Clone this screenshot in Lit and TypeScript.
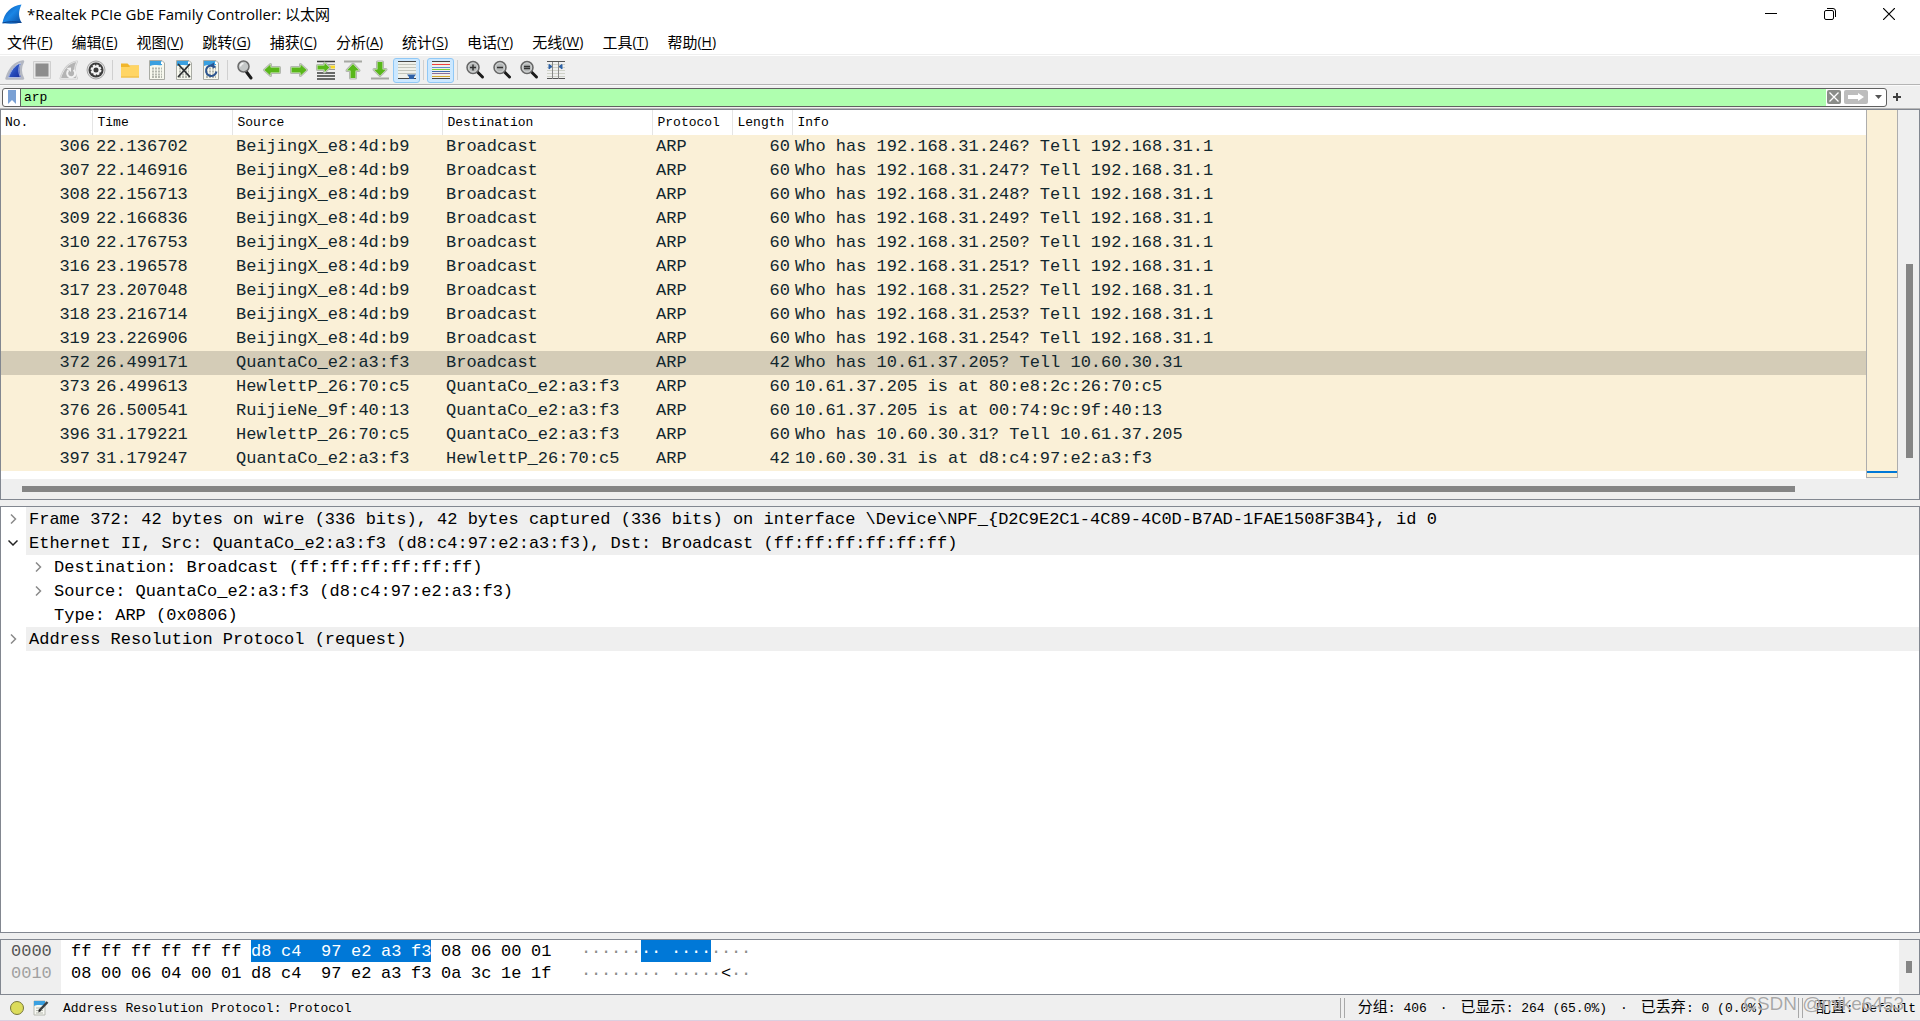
import { LitElement, html, css, svg, nothing } from "lit";
import { customElement, state } from "lit/decorators.js";
import { classMap } from "lit/directives/class-map.js";

type Packet = [number, string, string, string, number, string];
type Icon = ReturnType<typeof svg>;

const BJ = "BeijingX_e8:4d:b9";
const QC = "QuantaCo_e2:a3:f3";
const HP = "HewlettP_26:70:c5";
const probe = (no: number, time: string, host: number): Packet =>
  [no, time, BJ, "Broadcast", 60, `Who has 192.168.31.${host}? Tell 192.168.31.1`];

const PACKETS: Packet[] = [
  probe(306, "22.136702", 246),
  probe(307, "22.146916", 247),
  probe(308, "22.156713", 248),
  probe(309, "22.166836", 249),
  probe(310, "22.176753", 250),
  probe(316, "23.196578", 251),
  probe(317, "23.207048", 252),
  probe(318, "23.216714", 253),
  probe(319, "23.226906", 254),
  [372, "26.499171", QC, "Broadcast", 42, "Who has 10.61.37.205? Tell 10.60.30.31"],
  [373, "26.499613", HP, QC, 60, "10.61.37.205 is at 80:e8:2c:26:70:c5"],
  [376, "26.500541", "RuijieNe_9f:40:13", QC, 60, "10.61.37.205 is at 00:74:9c:9f:40:13"],
  [396, "31.179221", HP, QC, 60, "Who has 10.60.30.31? Tell 10.61.37.205"],
  [397, "31.179247", QC, HP, 42, "10.60.30.31 is at d8:c4:97:e2:a3:f3"],
];

const MENUS: [string, string][] = [
  ["文件", "F"], ["编辑", "E"], ["视图", "V"], ["跳转", "G"], ["捕获", "C"], ["分析", "A"],
  ["统计", "S"], ["电话", "Y"], ["无线", "W"], ["工具", "T"], ["帮助", "H"],
];

const TREE: { text: string; level: number; mark: "closed" | "open" | "none" }[] = [
  { text: "Frame 372: 42 bytes on wire (336 bits), 42 bytes captured (336 bits) on interface \\Device\\NPF_{D2C9E2C1-4C89-4C0D-B7AD-1FAE1508F3B4}, id 0", level: 0, mark: "closed" },
  { text: "Ethernet II, Src: QuantaCo_e2:a3:f3 (d8:c4:97:e2:a3:f3), Dst: Broadcast (ff:ff:ff:ff:ff:ff)", level: 0, mark: "open" },
  { text: "Destination: Broadcast (ff:ff:ff:ff:ff:ff)", level: 1, mark: "closed" },
  { text: "Source: QuantaCo_e2:a3:f3 (d8:c4:97:e2:a3:f3)", level: 1, mark: "closed" },
  { text: "Type: ARP (0x0806)", level: 1, mark: "none" },
  { text: "Address Resolution Protocol (request)", level: 0, mark: "closed" },
];

const HEX = [
  { offset: "0000", bytes: "ff ff ff ff ff ff d8 c4 97 e2 a3 f3 08 06 00 01", ascii: "················", from: 6, to: 11 },
  { offset: "0010", bytes: "08 00 06 04 00 01 d8 c4 97 e2 a3 f3 0a 3c 1e 1f", ascii: "·············<··", from: -1, to: -1 },
];

const page = svg`
  <path d="M2.500 .5H15L17.500 3V19.500H2.500Z" fill="#f7f8ee" stroke="#a9aba4"/>
  <path d="M3 1h12v4c-4 1-8-1-12 1z" fill="#3aa0e0"/><path d="M14 1v3h3z" fill="#fff"/>`;
const digits = svg`<path d="M5 8.500h10M5 11.500h10M5 14.500h10M5 17h10" stroke="#b4b7ae" stroke-width="2" stroke-dasharray="2 1"/>`;
const lens = (inner: Icon | typeof nothing) => svg`
  <path d="M12.500 12l5 5" stroke="#1c1c1c" stroke-width="3" stroke-linecap="round"/>
  <circle cx="8" cy="7.500" r="6" fill="#b5b8b8" stroke="#666" stroke-width="1.500"/>
  <circle cx="8" cy="7.500" r="4.500" fill="none" stroke="#d4d6d6"/>${inner}`;
const green = (d: string) => svg`
  <path d=${d} fill="#55b516" stroke="#b3b8af" stroke-width="3" stroke-linejoin="round"/>
  <path d=${d} fill="#5ab81c" stroke="#e3ecda" stroke-width="1" stroke-linejoin="round"/>
  <path d=${d} fill="#59b71a"/>`;
const FIN = "M1.500 18.500C4 10 9 3 18 1.500C14.500 8 15 13 18 18.500Z";

const ICONS: Record<string, Icon> = {
  start: svg`<defs><linearGradient id="g" x1="0" y1="0" x2="1" y2="1"><stop offset="0" stop-color="#5b83dd"/><stop offset=".6" stop-color="#2448b8"/><stop offset="1" stop-color="#1b2f9c"/></linearGradient></defs>
    <path d=${FIN} fill="url(#g)" stroke="#b4b8c2" stroke-width="2.500" stroke-linejoin="round"/><path d="M3.500 17.500C6 10.500 9.500 5.500 15.500 3C13 8.500 13.500 13 15.500 17.500Z" fill="url(#g)" stroke="#eef1fa" stroke-width=".6"/>`,
  stop: svg`<path d="M1.500 1.500h17v17h-17z" fill="#e8e8e8" stroke="#cfcfcf"/><path d="M3.500 3.500h13v13h-13z" fill="#8d8d8d"/>`,
  restart: svg`<path d=${FIN} fill="#bcbcbc" stroke="#c9c9c9" stroke-width="2" stroke-linejoin="round"/><path d=${FIN} fill="#b4b4b4" stroke="#f4f4f4" stroke-width=".7"/>
    <path d="M14.500 10a4 4 0 1 1-5 .3" fill="none" stroke="#f2f2f2" stroke-width="2"/><path d="M7.500 8l4.500-.5v4.500z" fill="#f2f2f2"/>`,
  options: svg`<circle cx="10" cy="10" r="9" fill="#dedede" stroke="#a6a6a6"/><circle cx="10" cy="10" r="7.500" fill="#3c3c3c"/>
    <circle cx="10" cy="10" r="4.500" fill="none" stroke="#f3f3f3" stroke-width="2" stroke-dasharray="2.200 1.300"/><circle cx="10" cy="10" r="3.500" fill="none" stroke="#f3f3f3" stroke-width="2"/><circle cx="10" cy="10" r="2" fill="#3c3c3c"/>`,
  open: svg`<path d="M1 3.500h6.500l2 2H19V17H1z" fill="#f1b62c"/><path d="M1 7h8l2-1.500h8V17.500H1z" fill="#ffd564"/><path d="M1 17h18" stroke="#eab741"/>`,
  save: svg`${page}${digits}`,
  close: svg`${page}${digits}<path d="M4.500 4.500l11 12M15.500 4.500l-11 12" stroke="#2f3234" stroke-width="1.800" stroke-linecap="round"/>`,
  reload: svg`${page}${digits}<path d="M14.500 7.500a5.300 5.300 0 1 0 1 4" fill="none" stroke="#2c5590" stroke-width="2"/><path d="M8.500 5.500L13 2.500v6z" fill="#2c5590"/>`,
  find: svg`<path d="M11.500 12l4.500 6" stroke="#1c1c1c" stroke-width="3" stroke-linecap="round"/><circle cx="8.500" cy="6.500" r="5.500" fill="#c4c7c7" stroke="#6a6a6a" stroke-width="1.500"/><path d="M5.500 6.500a3 3 0 0 1 3-3" stroke="#f4f4f4" stroke-width="1.500" fill="none"/>`,
  back: green("M2.500 10L8.500 4.500V7.500H17.500V12.500H8.500V15.500Z"),
  forward: green("M17.500 10L11.500 4.500V7.500H2.500V12.500H11.500V15.500Z"),
  goto: svg`<path d="M1 1.500h18M1 13h18M1 16h18M1 19h18" stroke="#3d3f3d" stroke-width="1.300"/><path d="M12 4.500h7M12 9.500h7" stroke="#999"/><path d="M13 7h6" stroke="#f8d928" stroke-width="3"/>${green("M13.500 7.500L8.500 3V5.500H1.500V9.500H8.500V12Z")}`,
  first: svg`<path d="M1 1.500h18" stroke="#a6a8a3" stroke-width="2"/>${green("M10 4L16 10.500H12.500V18H7.500V10.500H4Z")}`,
  last: svg`<path d="M1 18.500h18" stroke="#a6a8a3" stroke-width="2"/>${green("M10 15.500L16 9.500H12.500V2H7.500V9.500H4Z")}`,
  autoscroll: svg`<path d="M1 1h18v18H1z" fill="#eff1ea"/><path d="M1 1.500h18M1 18.500h18" stroke="#454745"/><path d="M1 4.500h18M1 7.500h18M1 10.500h18M1 13.500h18" stroke="#c3c6bc"/><path d="M10 14.500h9l-2 2.500v2h-5v-2z" fill="#2f62a8"/>`,
  colorize: svg`<path d="M1 1h18v18H1z" fill="#eff1ea"/><path d="M1 1.500h18M1 18.500h18" stroke="#454745"/><path d="M1 4.500h18" stroke="#ef3f3f"/><path d="M1 7.500h18" stroke="#5f8fd0"/><path d="M1 9.500h18" stroke="#7fd33a"/><path d="M1 11.500h18" stroke="#3f6cb0"/><path d="M1 13.500h18" stroke="#8c6f9c"/><path d="M1 16.500h18" stroke="#d2a62c"/>`,
  zoomin: lens(svg`<path d="M5 7.500h6M8 4.500v6" stroke="#333" stroke-width="1.500"/>`),
  zoomout: lens(svg`<path d="M5 7.500h6" stroke="#333" stroke-width="1.500"/>`),
  zoomreset: lens(svg`<path d="M5 6.500h6M5 8.500h6" stroke="#333" stroke-width="1.300"/>`),
  resize: svg`<path d="M1 4.500h18M1 7.500h18M1 10.500h18M1 13.500h18M1 16.500h18" stroke="#cfd2c8"/><path d="M1 1.500h18M1 18.500h18" stroke="#555"/><path d="M6.500 2v17M12.500 2v17" stroke="#888"/><path d="M3 4.500l3 2-3 2.500zM16 4.500l-3 2 3 2.500z" fill="#2f62a8" stroke="#2f62a8"/>`,
};

const TOOLS: [string, string][] = [
  ["start", "Start"], ["stop", "Stop"], ["restart", "Restart"], ["options", "Options"], ["", ""],
  ["open", "Open"], ["save", "Save"], ["close", "Close"], ["reload", "Reload"], ["", ""],
  ["find", "Find"], ["back", "Back"], ["forward", "Forward"], ["goto", "Go to packet"], ["first", "First packet"],
  ["last", "Last packet"], ["autoscroll", "Auto scroll"], ["", ""], ["colorize", "Colorize"], ["", ""],
  ["zoomin", "Zoom in"], ["zoomout", "Zoom out"], ["zoomreset", "Normal size"], ["resize", "Resize columns"],
];

const baseStyles = css`
  :host, * { box-sizing: border-box; }
  button { font: inherit; color: inherit; background: none; border: 0; padding: 0; margin: 0; }
  svg { display: block; }
  table { border-collapse: collapse; border-spacing: 0; }
  td, th { padding: 0; font-weight: normal; text-align: left; }
`;

@customElement("window-header")
class WindowHeader extends LitElement {
  static styles = [baseStyles, css`
    :host { display: block; background: #fff; color: #000; }
    .title { display: flex; align-items: center; height: 28px; padding: 0 2px; gap: 5px; }
    .name { flex: 1; font: 15px/20px "Open Sans", sans-serif; white-space: nowrap; }
    .cjk { font: 15px/20px "Noto Sans CJK SC", sans-serif; }
    .win { display: flex; }
    .win button { width: 59px; height: 28px; display: grid; place-items: center; }
    .menu { display: flex; height: 27px; padding: 0 7px; gap: 19px; border-bottom: 1px solid #efefef; margin-bottom: 1px; }
    .menu button { display: flex; align-items: center; height: 28px; font: 14px/20px "Open Sans", sans-serif; white-space: nowrap; }
    .key { text-decoration: underline; text-underline-offset: 2px; }
  `];
  render() {
    return html`
      <div class="title">
        <svg width="20" height="20" viewBox="0 0 20 20">
          <defs><linearGradient id="f" x1="0" y1="0" x2="1" y2="1"><stop offset="0" stop-color="#0a4fa8"/><stop offset=".5" stop-color="#1a86e6"/><stop offset="1" stop-color="#0a4a9e"/></linearGradient></defs>
          <path d="M.5 19C2 9 9 1.500 19.500 .5C16 8 16.500 13 19.500 18.500C13 20 6 20 .5 19Z" fill="url(#f)"/>
          <path d="M.5 19C6 17.500 13 17.500 19.500 18.500" fill="none" stroke="#0a3d86" stroke-width="1"/>
        </svg>
        <span class="name">*Realtek PCIe GbE Family Controller: <span class="cjk">以太网</span></span>
        <div class="win">
          <button aria-label="Minimize"><svg width="12" height="12"><path d="M0 5.500h12" stroke="#000"/></svg></button>
          <button aria-label="Restore"><svg width="12" height="12" fill="none" stroke="#000"><rect x=".5" y="2.500" width="9" height="9" rx="1.500"/><path d="M3 .5h6a2.500 2.500 0 0 1 2.500 2.500v6"/></svg></button>
          <button aria-label="Close"><svg width="12" height="12"><path d="M0 0l12 12M12 0L0 12" stroke="#000" stroke-width="1.200"/></svg></button>
        </div>
      </div>
      <nav class="menu">
        ${MENUS.map(([name, key]) => html`<button><span class="cjk">${name}</span>(<span class="key">${key}</span>)</button>`)}
      </nav>`;
  }
}

@customElement("tool-strip")
class ToolStrip extends LitElement {
  static styles = [baseStyles, css`
    :host { display: flex; align-items: center; height: 29px; padding: 0 1px; background: #efefef; border-bottom: 1px solid #b4b4b4; }
    button { width: 27px; height: 25px; display: grid; place-items: center; border-radius: 3px; }
    .on { background: #cce8ff; border: 1px solid #90c8f6; }
    .sep { width: 1px; height: 20px; margin: 0 3px; background: #d0d0d0; }
  `];
  render() {
    return TOOLS.map(([id, label]) => id
      ? html`<button class=${classMap({ on: id === "autoscroll" || id === "colorize" })} aria-label=${label}>
          <svg width="20" height="20" viewBox="0 0 20 20" fill="none">${ICONS[id]}</svg></button>`
      : html`<span class="sep"></span>`);
  }
}

@customElement("filter-bar")
class FilterBar extends LitElement {
  @state() value = "arp";
  static styles = [baseStyles, css`
    :host { display: flex; align-items: center; height: 24px; padding: 0 2px; background: #efefef; border-top: 1px solid #fafafa; border-bottom: 1px solid #b8b8b8; }
    .box { flex: 1; display: flex; align-items: center; height: 19px; border: 1px solid #606060; border-radius: 3px; background: #fff; overflow: hidden; }
    .mark { width: 18px; height: 17px; display: grid; place-items: center; border-right: 1px solid #606060; }
    input { flex: 1; min-width: 0; height: 17px; border: 0; outline: 0; padding: 0 3px; background: #afffaf; color: #000; font: 13px/17px "Liberation Mono", monospace; }
    .clear { width: 14px; height: 14px; margin: 0 3px 0 1px; background: #8b8d89; border-radius: 2px; }
    .apply { width: 24px; height: 14px; background: #bdbdbd; border-radius: 2px; }
    .drop { width: 18px; height: 17px; display: grid; place-items: center end; padding-right: 4px; }
    .plus { width: 20px; height: 18px; margin-right: 11px; display: grid; place-items: center; }
  `];
  render() {
    return html`
      <div class="box">
        <button class="mark" aria-label="Bookmarks"><svg width="8" height="14"><path d="M0 0h8v14l-4-4-4 4z" fill="#7aa0d4"/></svg></button>
        <input aria-label="Display filter" .value=${this.value} @input=${(e: Event) => (this.value = (e.target as HTMLInputElement).value)} />
        <button class="clear" aria-label="Clear" @click=${() => (this.value = "")}><svg width="14" height="14"><path d="M2.500 2.500l9 9M11.500 2.500l-9 9" stroke="#fff" stroke-width="1.300"/></svg></button>
        <button class="apply" aria-label="Apply"><svg width="24" height="14"><path d="M4 5h10V3l6 4-6 4V9H4z" fill="#fff"/></svg></button>
        <button class="drop" aria-label="Recent filters"><svg width="7" height="4"><path d="M0 0h7L3.500 4z" fill="#555"/></svg></button>
      </div>
      <button class="plus" aria-label="Add"><svg width="8" height="8"><path d="M4 0v8M0 4h8" stroke="#404040" stroke-width="2"/></svg></button>`;
  }
}

@customElement("packet-list")
class PacketList extends LitElement {
  @state() selected = 372;
  static styles = [baseStyles, css`
    :host { display: block; border: 1px solid #828790; background: #efefef; }
    .body { display: flex; height: 369px; }
    .rows { flex: 1; min-width: 0; background: #fff; }
    table { width: 100%; table-layout: fixed; }
    th { height: 25px; padding-left: 5px; color: #000; font: 13px/24px "Liberation Mono", monospace; border-right: 1px solid #e5e5e5; white-space: nowrap; }
    th:first-child { padding-left: 4px; }
    th:last-child { border-right: 0; }
    td { height: 24px; padding-left: 4px; font: 17px/24px "Liberation Mono", monospace; color: #12272e; white-space: nowrap; overflow: hidden; }
    tbody tr { background: #faf0d7; }
    tbody tr.sel { background: #d4ccb7; }
    td.num { text-align: right; padding: 0 2px 0 0; }
    td.info { padding-left: 3px; }
    .c-no { width: 91px; }
    .c-time { width: 140px; }
    .c-addr { width: 210px; }
    .c-proto { width: 80px; }
    .c-len { width: 60px; }
    .map { width: 32px; height: 368px; display: flex; flex-direction: column; border: 1px solid #adadad; border-top: 0; background: #faf0d7; }
    .mark { margin-top: auto; margin-bottom: 4px; height: 2px; background: #0078d7; }
    .vbar { width: 20px; margin-left: 1px; padding: 154px 6px 20px 7px; }
    .vthumb { height: 194px; background: #858585; }
    .hbar { height: 20px; padding: 7px 124px 7px 21px; }
    .hthumb { height: 6px; background: #858585; }
  `];
  render() {
    return html`
      <div class="body">
        <div class="rows">
          <table>
            <colgroup><col class="c-no" /><col class="c-time" /><col class="c-addr" /><col class="c-addr" /><col class="c-proto" /><col class="c-len" /><col /></colgroup>
            <thead><tr>${["No.", "Time", "Source", "Destination", "Protocol", "Length", "Info"].map((h) => html`<th scope="col">${h}</th>`)}</tr></thead>
            <tbody>
              ${PACKETS.map(([no, time, src, dst, len, info]) => html`
                <tr class=${classMap({ sel: no === this.selected })} @click=${() => (this.selected = no)}>
                  <td class="num">${no}</td><td>${time}</td><td>${src}</td><td>${dst}</td><td>ARP</td><td class="num">${len}</td><td class="info">${info}</td>
                </tr>`)}
            </tbody>
          </table>
        </div>
        <div class="map"><div class="mark"></div></div>
        <div class="vbar"><div class="vthumb"></div></div>
      </div>
      <div class="hbar"><div class="hthumb"></div></div>`;
  }
}

@customElement("packet-details")
class PacketDetails extends LitElement {
  static styles = [baseStyles, css`
    :host { display: block; border: 1px solid #828790; background: #fff; overflow: hidden; }
    ul { list-style: none; margin: 0; padding: 0; }
    li { display: flex; height: 24px; color: #000; font: 17px/25px "Liberation Mono", monospace; white-space: nowrap; }
    .nested { padding-left: 25px; }
    button, .blank { width: 25px; height: 24px; padding-right: 2px; display: grid; place-items: center; }
    .text { flex: 1; padding-left: 3px; }
    .top .text { background: #efefef; }
  `];
  render() {
    return html`<ul>${TREE.map((n) => html`
      <li class=${n.level ? "nested" : "top"}>
        ${n.mark === "none" ? html`<span class="blank"></span>` : html`
          <button aria-label="Toggle" aria-expanded=${n.mark === "open"}>
            <svg width="10" height="10" fill="none" stroke-width="1.500">
              ${n.mark === "open"
                ? svg`<path d="M.5 2.500L5 7l4.500-4.500" stroke="#222"/>`
                : svg`<path d="M3 .5L7.500 5 3 9.500" stroke="#8a8a8a"/>`}
            </svg>
          </button>`}
        <span class="text">${n.text}</span>
      </li>`)}</ul>`;
  }
}

@customElement("hex-view")
class HexView extends LitElement {
  static styles = [baseStyles, css`
    :host { display: flex; border: 1px solid #828790; background: linear-gradient(90deg, #efefef 60px, #fff 60px); height: 56px; }
    .dump { flex: 1; color: #000; font: 17px/24px "Liberation Mono", monospace; }
    .row { display: flex; height: 22px; }
    .row span { height: 22px; }
    .off { width: 60px; padding-left: 10px; margin-right: 10px; color: #555; }
    .off.dim { color: #a0a0a0; }
    .byte { width: 20px; }
    .char, .sp { width: 10px; }
    .char { color: #8a8a8a; }
    .char.print { color: #000; }
    .hl, .char.hl { background: #0078d7; color: #fff; }
    .gap { width: 30px; }
    .bar { width: 20px; padding: 21px 7px 0 7px; background: #efefef; }
    .thumb { height: 12px; background: #858585; }
  `];
  private sep(i: number, from: number, to: number) {
    const hl = i > from && i <= to && from >= 0;
    return html`<span class=${classMap({ sp: true, hl })}></span>`;
  }
  render() {
    return html`
      <div class="dump">
        ${HEX.map(({ offset, bytes, ascii, from, to }) => {
          const on = (i: number) => from >= 0 && i >= from && i <= to;
          return html`<div class="row">
            <span class=${classMap({ off: true, dim: from < 0 })}>${offset}</span>
            ${bytes.split(" ").map((b, i) => html`${i ? this.sep(i, from, to) : nothing}${i === 8 ? this.sep(i, from, to) : nothing}<span class=${classMap({ byte: true, hl: on(i) })}>${b}</span>`)}
            <span class="gap"></span>
            ${[...ascii].map((c, i) => html`${i === 8 ? this.sep(i, from, to) : nothing}<span class=${classMap({ char: true, hl: on(i), print: c !== "·" })}>${c}</span>`)}
          </div>`;
        })}
      </div>
      <div class="bar"><div class="thumb"></div></div>`;
  }
}

@customElement("status-strip")
class StatusStrip extends LitElement {
  static styles = [baseStyles, css`
    :host { display: flex; align-items: center; position: relative; height: 26px; padding: 0 4px 0 9px; background: #efefef; border-bottom: 1px solid #dccfe0; color: #000; font: 13px/24px "Liberation Mono", monospace; white-space: nowrap; }
    .msg { flex: 1; padding: 2px 0 0 14px; }
    .icons { display: flex; gap: 8px; }
    .cjk { font: 15px/24px "Noto Sans CJK SC", sans-serif; }
    .stats { display: flex; align-items: baseline; gap: 13px; width: 440px; }
    .grip { width: 5px; height: 20px; border: solid #a8a8a8; border-width: 0 1px; margin-right: 13px; }
    .wm { position: absolute; right: 16px; top: -3px; font: 19px/24px "Liberation Sans", sans-serif; color: rgba(140, 140, 140, .75); text-shadow: 0 0 1px #fff; }
  `];
  render() {
    return html`
      <div class="icons">
        <button aria-label="Expert info"><svg width="16" height="16"><circle cx="8" cy="8" r="6.500" fill="#dcdc5a" stroke="#77773a"/></svg></button>
        <button aria-label="Capture comment"><svg width="16" height="16"><path d="M1 1h11v14H1z" fill="#f7f8f2" stroke="#b8bab2"/><path d="M1 1h11v4c-4 1-7-1-11 1z" fill="#3aa0e0"/><path d="M3 8h7M3 10.500h7M3 13h7" stroke="#b4b7ae"/><path d="M14.500 2L6 11" stroke="#3a3f42" stroke-width="2.500"/><path d="M6.500 9.500l-1.500 3 3-1.500z" fill="#222"/></svg></button>
      </div>
      <span class="msg">Address Resolution Protocol: Protocol</span>
      <span class="grip"></span>
      <span class="stats">
        <span><span class="cjk">分组</span>: 406</span><span>·</span>
        <span><span class="cjk">已显示</span>: 264 (65.0%)</span><span>·</span>
        <span><span class="cjk">已丢弃</span>: 0 (0.0%)</span>
      </span>
      <span class="grip"></span>
      <span><span class="cjk">配置</span>: Default</span>
      <span class="wm">CSDN @mike6453</span>`;
  }
}

@customElement("app-root")
class AppRoot extends LitElement {
  static styles = css`
    :host { display: flex; flex-direction: column; min-height: 100vh; background: #efefef; }
    packet-details { flex: 1; margin: 6px 0; }
  `;
  render() {
    return html`
      <window-header></window-header>
      <tool-strip></tool-strip>
      <filter-bar></filter-bar>
      <packet-list></packet-list>
      <packet-details></packet-details>
      <hex-view></hex-view>
      <status-strip></status-strip>`;
  }
}
